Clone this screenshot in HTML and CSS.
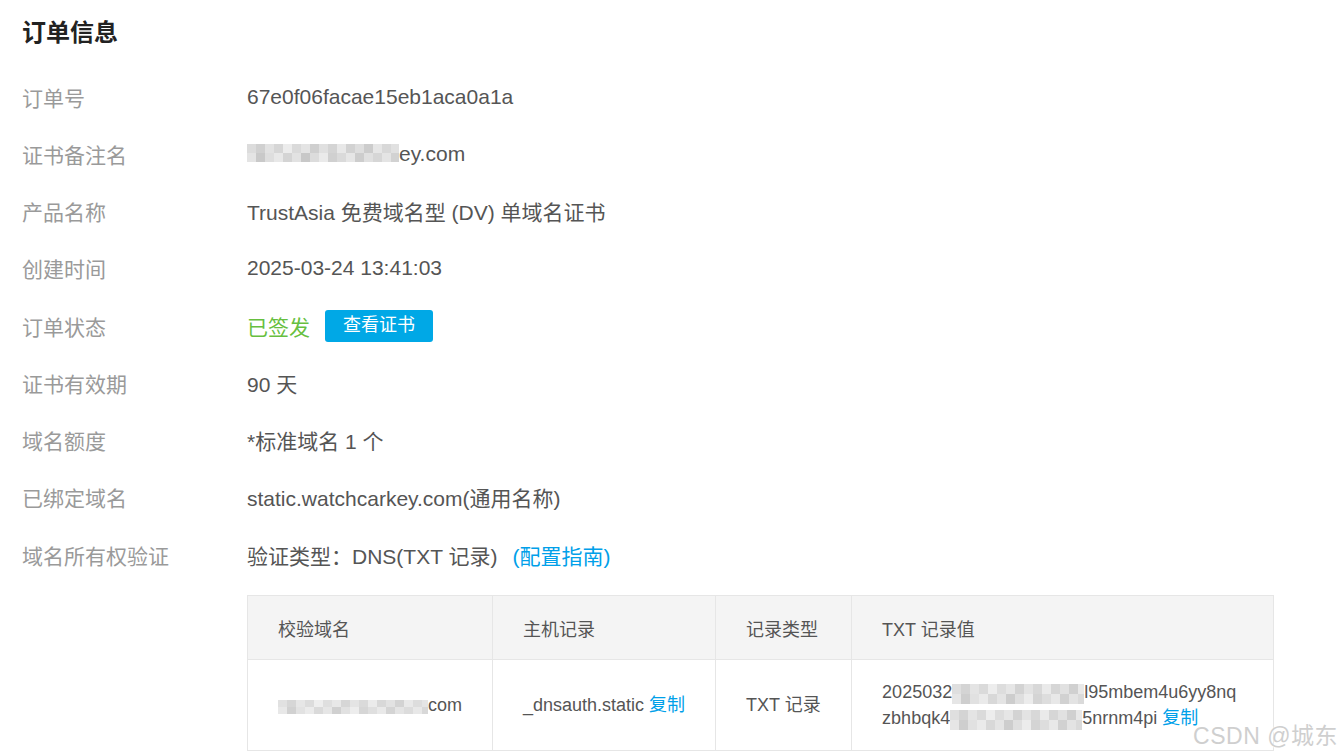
FILE: index.html
```html
<!DOCTYPE html>
<html lang="zh-CN">
<head>
    <meta charset="UTF-8">
    <title>订单信息</title>
    <link rel="stylesheet" href="styles.css">
</head>
<body>

    <h1>订单信息</h1>

    <div class="info">
        <div class="row"><span class="label">订单号</span><span class="value">67e0f06facae15eb1aca0a1a</span></div>
        <div class="row"><span class="label">证书备注名</span><span class="value"><span class="mosaic m-name"></span>ey.com</span></div>
        <div class="row"><span class="label">产品名称</span><span class="value">TrustAsia 免费域名型 (DV) 单域名证书</span></div>
        <div class="row"><span class="label">创建时间</span><span class="value">2025-03-24 13:41:03</span></div>
        <div class="row"><span class="label">订单状态</span><span class="value"><span class="ok">已签发</span><a class="btn">查看证书</a></span></div>
        <div class="row"><span class="label">证书有效期</span><span class="value">90 天</span></div>
        <div class="row"><span class="label">域名额度</span><span class="value">*标准域名 1 个</span></div>
        <div class="row"><span class="label">已绑定域名</span><span class="value">static.watchcarkey.com(通用名称)</span></div>
        <div class="row"><span class="label">域名所有权验证</span><span class="value">验证类型：DNS(TXT 记录)<a class="link guide">(配置指南)</a></span></div>
    </div>

    <table class="dns">
        <thead>
            <tr>
                <th class="c1">校验域名</th>
                <th class="c2">主机记录</th>
                <th class="c3">记录类型</th>
                <th class="c4">TXT 记录值</th>
            </tr>
        </thead>
        <tbody>
            <tr>
                <td><span class="mosaic m-domain"></span>com</td>
                <td>_dnsauth.static <a class="link">复制</a></td>
                <td>TXT 记录</td>
                <td class="txt">
                    2025032<span class="mosaic m-txt"></span>l95mbem4u6yy8nq<br>
                    zbhbqk4<span class="mosaic m-txt"></span>5nrnm4pi <a class="link">复制</a>
                </td>
            </tr>
        </tbody>
    </table>

    <div class="watermark">CSDN @城东</div>

</body>
</html>
```

FILE: styles.css
```css
body {
    margin: 0;
    padding: 0 22px;
    font-family: "Liberation Sans", Arial, "Noto Sans CJK SC", sans-serif;
    color: #555;
    background: #fff;
    position: relative;
    min-height: 756px;
    overflow: hidden;
}
h1 {
    margin: 0;
    height: 68px;
    line-height: 66px;
    font-size: 24px;
    font-weight: bold;
    color: #222;
}
.row {
    display: flex;
    align-items: center;
    height: 57.25px;
    font-size: 21px;
}
.label {
    width: 225px;
    flex-shrink: 0;
    color: #9a9a9a;
}
.value {
    display: flex;
    align-items: center;
    color: #555;
    white-space: nowrap;
}
.ok {
    color: #67bf3f;
}
.btn {
    display: inline-block;
    margin-left: 15px;
    width: 108px;
    height: 32px;
    line-height: 31px;
    text-align: center;
    background-color: #00a8e6;
    color: #fff;
    font-size: 18px;
    border-radius: 3px;
}
.link {
    color: #00a0e9;
}
.guide {
    margin-left: 15px;
}
.mosaic {
    display: inline-block;
    height: 18px;
    background-image:
        linear-gradient(90deg, #dcdcdc 0 9px, #d0d0d0 9px 18px, #e2e2e2 18px 27px, #d6d6d6 27px 36px, #ececec 36px 45px, #dadada 45px 54px, #e4e4e4 54px 63px, #cfcfcf 63px 72px, #e0e0e0 72px 81px, #d4d4d4 81px 90px, #e8e8e8 90px 99px, #d2d2d2 99px 108px, #dedede 108px 117px, #cccccc 117px 126px, #e6e6e6 126px 135px, #d8d8d8 135px 144px, #e1e1e1 144px 153px),
        linear-gradient(90deg, #e4e4e4 0 9px, #c9c9c9 9px 18px, #dedede 18px 27px, #e8e8e8 27px 36px, #d4d4d4 36px 45px, #e2e2e2 45px 54px, #c8c8c8 54px 63px, #dcdcdc 63px 72px, #eaeaea 72px 81px, #d0d0d0 81px 90px, #dadada 90px 99px, #e6e6e6 99px 108px, #cdcdcd 108px 117px, #e0e0e0 117px 126px, #d6d6d6 126px 135px, #e4e4e4 135px 144px, #d2d2d2 144px 153px);
    background-size: 100% 50%;
    background-position: 0 0, 0 100%;
    background-repeat: no-repeat;
    vertical-align: middle;
}
.m-name {
    width: 152px;
    margin-top: -2px;
}
.m-domain {
    width: 150px;
    height: 14px;
    opacity: 0.85;
}
.m-txt {
    width: 132px;
    height: 20px;
    opacity: 0.9;
}
.dns {
    margin: 12px 0 0 225px;
    width: 1027px;
    border-collapse: collapse;
    font-size: 18px;
    color: #555;
}
.dns th,
.dns td {
    border: 1px solid #e6e6e6;
    padding: 0 30px;
    text-align: left;
    font-weight: normal;
    white-space: nowrap;
}
.dns th {
    height: 63px;
    background-color: #f4f4f4;
}
.dns td {
    height: 90px;
    line-height: 26px;
}
.dns .c1 { width: 183px; }
.dns .c2 { width: 161px; }
.dns .c3 { width: 75px; }
.watermark {
    position: absolute;
    right: 4px;
    bottom: 5px;
    font-size: 23px;
    color: #cfcfcf;
    text-shadow: 0 0 2px #fff, 1px 1px 1px #fff;
    letter-spacing: 0.5px;
}
```
